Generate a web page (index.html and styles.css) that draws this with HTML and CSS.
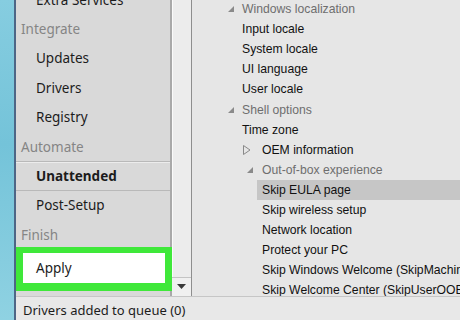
FILE: index.html
```html
<!DOCTYPE html>
<html lang="en">
  <head>
    <meta charset="UTF-8" />
    <title>Unattended setup</title>
    <link rel="stylesheet" href="styles.css">
  </head>
  <body>
    <div class="screen">
      <div class="desktop"></div>

      <div class="window">
        <div class="panes">
          <!--
            Left navigation
          -->
          <nav class="nav">
            <ul class="nav-list">
              <li class="item">Extra Services</li>
              <li class="group">Integrate</li>
              <li class="item">Updates</li>
              <li class="item">Drivers</li>
              <li class="item">Registry</li>
              <li class="group">Automate</li>
              <li class="item active">Unattended</li>
              <li class="item">Post-Setup</li>
              <li class="group">Finish</li>
              <li class="item apply">Apply</li>
            </ul>
          </nav>

          <div class="scrollbar">
            <div class="track"></div>
            <div class="arrow-btn">
              <svg width="9" height="6" viewBox="0 0 9 6" aria-hidden="true">
                <polygon points="0,0 9,0 4.5,5" fill="#3a3a3a" />
              </svg>
            </div>
          </div>

          <!--
            Settings tree
          -->
          <div class="tree">
            <div class="row l1 head">
              <svg class="tri" width="6" height="6" viewBox="0 0 6 6"><polygon points="6,0 6,6 0,6" fill="#8a8a8a" /></svg>
              Windows localization
            </div>
            <div class="row l1">Input locale</div>
            <div class="row l1">System locale</div>
            <div class="row l1">UI language</div>
            <div class="row l1">User locale</div>
            <div class="row l1 head">
              <svg class="tri" width="6" height="6" viewBox="0 0 6 6"><polygon points="6,0 6,6 0,6" fill="#8a8a8a" /></svg>
              Shell options
            </div>
            <div class="row l1">Time zone</div>
            <div class="row l2 closed">
              <svg class="tri-open" width="8" height="10" viewBox="0 0 8 10"><polygon points="0.5,0.5 7,5 0.5,9.5" fill="none" stroke="#8a8a8a" /></svg>
              OEM information
            </div>
            <div class="row l2 open head">
              <svg class="tri" width="6" height="6" viewBox="0 0 6 6"><polygon points="6,0 6,6 0,6" fill="#8a8a8a" /></svg>
              Out-of-box experience
            </div>
            <div class="row l3 selected">Skip EULA page</div>
            <div class="row l3">Skip wireless setup</div>
            <div class="row l3">Network location</div>
            <div class="row l3">Protect your PC</div>
            <div class="row l3">Skip Windows Welcome (SkipMachineOOBE)</div>
            <div class="row l3">Skip Welcome Center (SkipUserOOBE)</div>
          </div>
        </div>

        <div class="status">Drivers added to queue (0)</div>
      </div>
    </div>
  </body>
</html>
```

FILE: styles.css
```css
/*
  Global styles
*/

:root {
  --nav-bg: #d9d9d9;
  --pane-bg: #e6e6e6;
  --green: #3fe83a;
  --muted: #858585;
}
* {
  margin: 0;
  padding: 0;
  box-sizing: border-box;
}
body {
  background: #e6e6e6;
  font-family: "Noto Sans", "Open Sans", sans-serif;
}
ul {
  list-style: none;
}

.screen {
  display: flex;
  width: 460px;
  height: 320px;
  overflow: hidden;
}
.desktop {
  width: 14px;
  background: linear-gradient(180deg, #86cde0 0%, #74c3d9 45%, #8fd2e2 100%);
}
.window {
  flex: 1;
  display: flex;
  flex-direction: column;
  min-width: 0;
  border-left: 2px solid #4d6686;
}
.panes {
  flex: 1;
  display: flex;
  min-height: 0;
  overflow: hidden;
}

/*
  [1] Left navigation
*/

.nav {
  flex: 0 0 154px;
  background: var(--nav-bg);
}
.nav-list {
  margin-top: -15px;
  font-size: 13.5px;
}
.nav-list li {
  height: 29.4px;
  display: flex;
  align-items: center;
}
.nav-list .group {
  padding-left: 5px;
  color: var(--muted);
}
.nav-list .item {
  padding-left: 20px;
  color: #1c1c1c;
}
.nav-list .active {
  font-weight: bold;
  border-top: 1px solid #b9b9b9;
  border-bottom: 1px solid #b9b9b9;
  box-shadow: inset 0 1px #ececec;
}
.nav-list .apply {
  position: relative;
  z-index: 1;
  height: 44px;
  margin: -3px -2px 0 0;
  padding-left: 13px;
  background: #fff;
  border: solid var(--green);
  border-width: 6px 7px 8px 7px;
}

/*
  Scrollbar
*/

.scrollbar {
  flex: 0 0 22px;
  display: flex;
  flex-direction: column;
  background: #ececec;
  border-left: 2px solid #a9a9a9;
  border-right: 1px solid #8e8e8e;
  box-shadow: inset 1px 0 #fafafa;
}
.track {
  flex: 1;
}
.arrow-btn {
  height: 19px;
  display: flex;
  align-items: center;
  justify-content: center;
  border-top: 1px solid #c4c4c4;
  background: #f0f0f0;
}

/*
  [2] Settings tree
*/

.tree {
  flex: 1;
  min-width: 0;
  margin-top: -1px;
  background: var(--pane-bg);
  font-family: "Liberation Sans", Arial, sans-serif;
  font-size: 12.2px;
  color: #111;
  white-space: nowrap;
}
.tree .row {
  height: 20.1px;
  display: flex;
  align-items: center;
}
.tree .head {
  color: #6e6e6e;
}
.tree .l1 {
  padding-left: 50px;
}
.tree .l1.head {
  padding-left: 36px;
}
.tree .l1.head .tri {
  margin-right: 8px;
}
.tree .l2.closed {
  padding-left: 51px;
  color: #111;
}
.tree .tri-open {
  margin-right: 11px;
}
.tree .l2.open {
  padding-left: 55px;
}
.tree .l2.open .tri {
  margin-right: 9px;
}
.tree .l3 {
  margin-left: 65px;
  padding-left: 5px;
}
.tree .selected {
  background: #c6c6c6;
}

/*
  Status bar
*/

.status {
  height: 24px;
  padding: 4px 0 0 7px;
  border-top: 1px solid #c6c6c6;
  background: #e8e8e8;
  font-size: 13px;
  color: #1c1c1c;
  white-space: nowrap;
}
```
